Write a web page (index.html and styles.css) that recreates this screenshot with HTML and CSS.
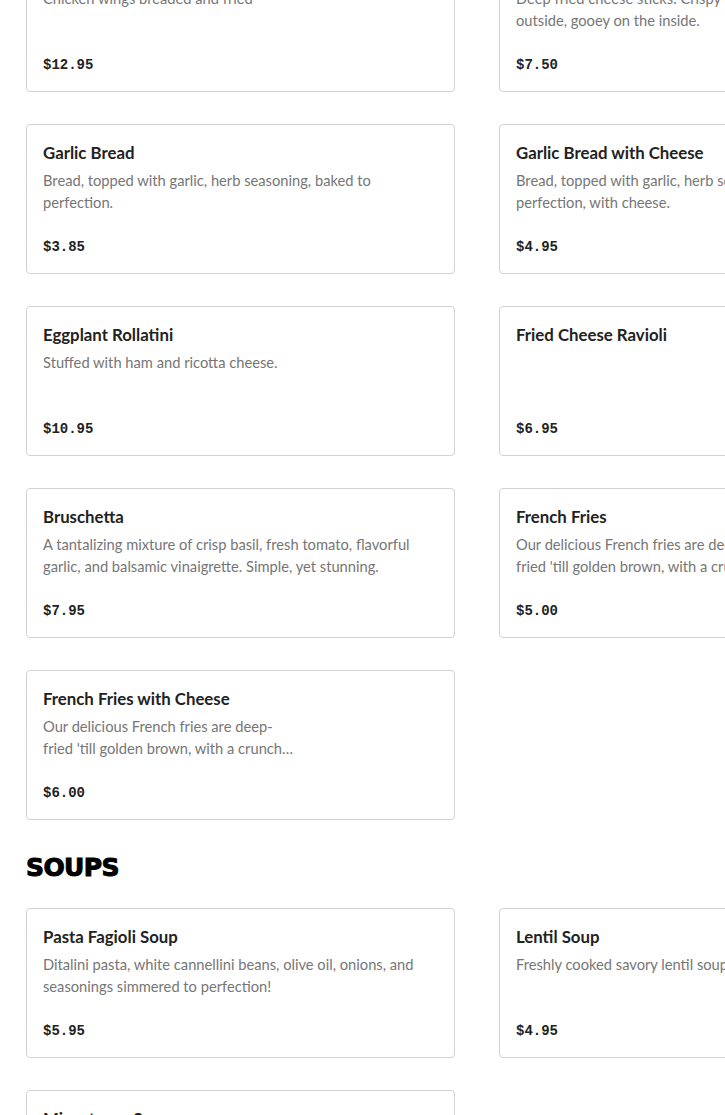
FILE: index.html
```html
<!DOCTYPE html>
<html>
<head>
<meta charset="utf-8">
<link rel="stylesheet" href="styles.css">
</head>
<body>
<main class="menu">
  <section class="section">
    <div class="grid">
      <article class="card">
        <h3 class="card-title">Buffalo Wings</h3>
        <p class="card-desc">Chicken wings breaded and fried</p>
        <div class="card-price">$12.95</div>
      </article>
      <article class="card">
        <h3 class="card-title">Mozzarella Sticks</h3>
        <p class="card-desc card-desc--clamp">Deep fried cheese sticks. Crispy on the outside, gooey on the inside.</p>
        <div class="card-price">$7.50</div>
      </article>
      <article class="card">
        <h3 class="card-title">Garlic Bread</h3>
        <p class="card-desc">Bread, topped with garlic, herb seasoning, baked to perfection.</p>
        <div class="card-price">$3.85</div>
      </article>
      <article class="card">
        <h3 class="card-title">Garlic Bread with Cheese</h3>
        <p class="card-desc">Bread, topped with garlic, herb seasoning, baked to perfection, with cheese.</p>
        <div class="card-price">$4.95</div>
      </article>
      <article class="card">
        <h3 class="card-title">Eggplant Rollatini</h3>
        <p class="card-desc">Stuffed with ham and ricotta cheese.</p>
        <div class="card-price">$10.95</div>
      </article>
      <article class="card">
        <h3 class="card-title">Fried Cheese Ravioli</h3>
        <p class="card-desc"></p>
        <div class="card-price">$6.95</div>
      </article>
      <article class="card">
        <h3 class="card-title">Bruschetta</h3>
        <p class="card-desc">A tantalizing mixture of crisp basil, fresh tomato, flavorful garlic, and balsamic vinaigrette. Simple, yet stunning.</p>
        <div class="card-price">$7.95</div>
      </article>
      <article class="card">
        <h3 class="card-title">French Fries</h3>
        <p class="card-desc card-desc--clamp">Our delicious French fries are deep-fried 'till golden brown, with a crunchy outside and a fluffy inside.</p>
        <div class="card-price">$5.00</div>
      </article>
      <article class="card">
        <h3 class="card-title">French Fries with Cheese</h3>
        <p class="card-desc card-desc--clamp">Our delicious French fries are deep-fried 'till golden brown, with a crunchy outside and a fluffy inside.</p>
        <div class="card-price">$6.00</div>
      </article>
    </div>
  </section>

  <section class="section">
    <h2 class="section-title">SOUPS</h2>
    <div class="grid">
      <article class="card">
        <h3 class="card-title">Pasta Fagioli Soup</h3>
        <p class="card-desc">Ditalini pasta, white cannellini beans, olive oil, onions, and seasonings simmered to perfection!</p>
        <div class="card-price">$5.95</div>
      </article>
      <article class="card">
        <h3 class="card-title">Lentil Soup</h3>
        <p class="card-desc">Freshly cooked savory lentil soup.</p>
        <div class="card-price">$4.95</div>
      </article>
      <article class="card">
        <h3 class="card-title">Minestrone Soup</h3>
        <p class="card-desc">Hearty vegetable soup with beans and pasta.</p>
        <div class="card-price">$4.95</div>
      </article>
    </div>
  </section>
</main>
</body>
</html>
```

FILE: styles.css
```css
html, body {
  margin: 0;
  padding: 0;
  background: #ffffff;
  overflow: hidden;
}

body {
  font-family: Lato, "Noto Sans", Arial, sans-serif;
  color: #222222;
}

.menu {
  padding: 0 0 0 26px;
  margin-top: -58px;
  width: 902px;
}

.section-title {
  margin: 32px 0 24px;
  font-family: "DejaVu Sans", Arial, sans-serif;
  font-weight: 900;
  font-size: 25px;
  line-height: 32px;
  letter-spacing: -0.6px;
  -webkit-text-stroke: 1px #000000;
  color: #000000;
}

.grid {
  display: grid;
  grid-template-columns: 429px 429px;
  column-gap: 44px;
  row-gap: 32px;
}

.card {
  box-sizing: border-box;
  height: 150px;
  border: 1px solid #d2d2d2;
  border-radius: 4px;
  padding: 16px;
  background: #ffffff;
  display: flex;
  flex-direction: column;
}

.card-title {
  margin: 0;
  font-size: 16.8px;
  line-height: 24px;
  font-weight: 700;
  color: #222222;
}

.card-desc {
  margin: 4px 0 0;
  font-size: 14.7px;
  line-height: 22px;
  color: #767676;
  min-height: 44px;
}

.card-desc--clamp {
  width: 252px;
  display: -webkit-box;
  -webkit-box-orient: vertical;
  -webkit-line-clamp: 2;
  overflow: hidden;
}

.card-price {
  margin-top: auto;
  font-family: "Liberation Mono", "DejaVu Sans Mono", monospace;
  font-weight: 700;
  font-size: 14px;
  line-height: 20px;
  color: #222222;
}
```
